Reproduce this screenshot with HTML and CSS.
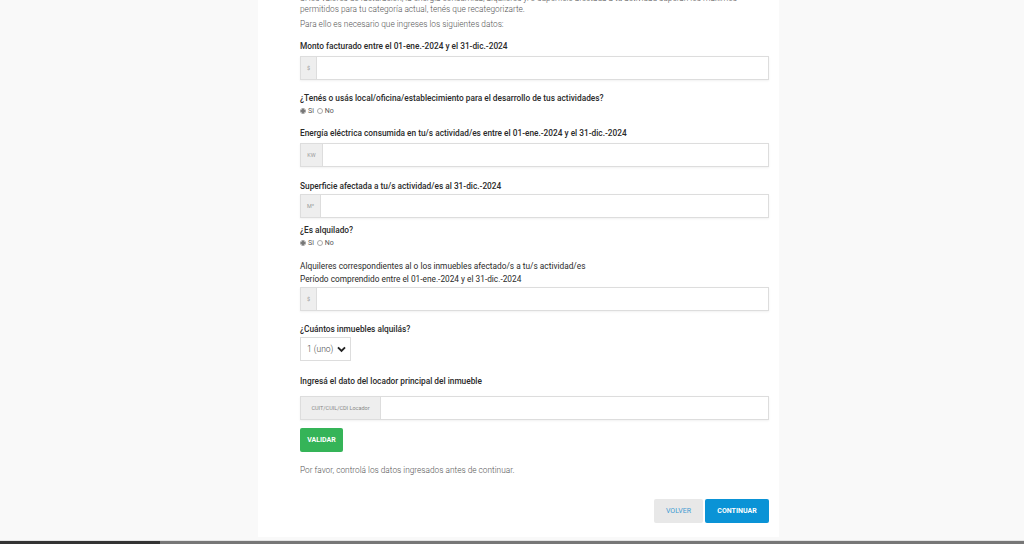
FILE: index.html
```html
<!DOCTYPE html>
<html lang="es">
<head>
<meta charset="utf-8">
<link rel="stylesheet" href="styles.css">
</head>
<body>
<div class="page">
  <main class="card">
    <p class="intro intro-cut">Si los valores de facturación, la energía consumida, alquileres y/o superficie afectada a tu actividad superan los máximos<br>permitidos para tu categoría actual, tenés que recategorizarte.</p>
    <p class="intro">Para ello es necesario que ingreses los siguientes datos:</p>

    <div class="field f-monto">
      <label class="lbl">Monto facturado entre el 01-ene.-2024 y el 31-dic.-2024</label>
      <div class="group"><span class="addon a-dollar">$</span><span class="ctrl"></span></div>
    </div>

    <div class="field f-local">
      <label class="lbl lbl-radio">¿Tenés o usás local/oficina/establecimiento para el desarrollo de tus actividades?</label>
      <div class="radios"><span class="radio on"></span>Si <span class="radio"></span>No</div>
    </div>

    <div class="field f-energia">
      <label class="lbl">Energía eléctrica consumida en tu/s actividad/es entre el 01-ene.-2024 y el 31-dic.-2024</label>
      <div class="group"><span class="addon a-kw">KW</span><span class="ctrl"></span></div>
    </div>

    <div class="field f-sup">
      <label class="lbl lbl-tight">Superficie afectada a tu/s actividad/es al 31-dic.-2024</label>
      <div class="group"><span class="addon a-m2">M²</span><span class="ctrl"></span></div>
    </div>

    <div class="field f-alq">
      <label class="lbl lbl-radio">¿Es alquilado?</label>
      <div class="radios"><span class="radio on"></span>Si <span class="radio"></span>No</div>
    </div>

    <div class="field f-alquileres">
      <label class="lbl lbl-reg">Alquileres correspondientes al o los inmuebles afectado/s a tu/s actividad/es<br>Período comprendido entre el 01-ene.-2024 y el 31-dic.-2024</label>
      <div class="group"><span class="addon a-dollar">$</span><span class="ctrl"></span></div>
    </div>

    <div class="field f-cuantos">
      <label class="lbl lbl-sel">¿Cuántos inmuebles alquilás?</label>
      <div class="select">1 (uno)
        <svg class="chev" viewBox="0 0 10 8" width="9" height="7"><path d="M1 1.5 L5 5.5 L9 1.5" fill="none" stroke="#222" stroke-width="2.2"/></svg>
      </div>
    </div>

    <div class="field f-locador">
      <label class="lbl">Ingresá el dato del locador principal del inmueble</label>
      <div class="group"><span class="addon a-cuit">CUIT/CUIL/CDI Locador</span><span class="ctrl"></span></div>
    </div>

    <button class="btn btn-green">VALIDAR</button>

    <p class="intro note">Por favor, controlá los datos ingresados antes de continuar.</p>

    <div class="actions">
      <button class="btn btn-gray">VOLVER</button>
      <button class="btn btn-blue">CONTINUAR</button>
    </div>
  </main>
</div>
<div class="scrollbar"><span class="thumb"></span></div>
</body>
</html>
```
FILE: styles.css
```css
html, body {
  margin: 0;
  padding: 0;
}
body {
  background: #f9f9f9;
  font-family: Roboto, "Liberation Sans", sans-serif;
  color: #333;
  width: 1024px;
  height: 544px;
  overflow: hidden;
  position: relative;
}
.page {
  height: 537px;
  overflow: hidden;
}
.card {
  margin-left: 258px;
  width: 521px;
  box-sizing: border-box;
  padding: 0 10px 0 42px;
  background: #fff;
  height: 537px;
  display: flex;
  flex-direction: column;
}
.card > * {
  flex-shrink: 0;
}
.intro {
  margin: 0;
  font-size: 8.3px;
  line-height: 11px;
  font-weight: 300;
  color: #555;
}
.intro-cut {
  margin-top: -7px;
}
.intro + .intro {
  margin-top: 4px;
}
.field {
  display: flex;
  flex-direction: column;
}
.field > * {
  flex-shrink: 0;
}
.lbl {
  font-size: 8.3px;
  line-height: 11px;
  font-weight: 500;
  color: #2a2a2a;
  margin-bottom: 4px;
}
.lbl-radio { margin-bottom: 0; }
.lbl-tight { margin-bottom: 2px; }
.lbl-sel { margin-bottom: 2px; }
.lbl-reg {
  font-weight: 400;
  line-height: 13px;
  margin-bottom: 1px;
}
.f-monto { margin-top: 11px; }
.f-local { margin-top: 13px; }
.f-energia { margin-top: 12px; }
.f-sup { margin-top: 14px; }
.f-alq { margin-top: 7px; }
.f-alquileres { margin-top: 12px; }
.f-cuantos { margin-top: 13px; }
.f-locador { margin-top: 15px; }
.f-locador .lbl { margin-bottom: 9px; }

.group {
  display: flex;
  height: 24px;
  border: 1px solid #ddd;
  box-sizing: border-box;
  box-shadow: 0 1px 2px rgba(0,0,0,0.06);
}
.addon {
  background: #eee;
  border-right: 1px solid #ddd;
  color: #999;
  font-size: 5.5px;
  display: flex;
  align-items: center;
  justify-content: center;
}
.a-dollar { width: 15px; }
.a-kw { width: 21px; }
.a-m2 { width: 19px; }
.a-cuit { width: 79px; color: #888; }
.ctrl { flex: 1; background: #fff; }

.radios {
  display: flex;
  align-items: center;
  font-size: 7px;
  color: #555;
  line-height: 10px;
  margin-top: 2px;
}
.radio {
  width: 6px;
  height: 6px;
  border: 1px solid #aaa;
  border-radius: 50%;
  margin-right: 2px;
  box-sizing: border-box;
}
.radio:not(:first-child) { margin-left: 3px; }
.radio.on {
  background: radial-gradient(circle, #777 0 1.6px, #fff 1.9px);
  border-color: #999;
}

.select {
  width: 51px;
  height: 24px;
  box-sizing: border-box;
  border: 1px solid #ddd;
  display: flex;
  align-items: center;
  justify-content: space-between;
  padding: 0 4px 0 6px;
  font-size: 8.5px;
  font-weight: 300;
  color: #444;
}
.chev { display: block; }

.btn {
  border: 0;
  font-family: inherit;
  font-size: 7px;
  font-weight: 700;
  height: 24px;
  padding: 0;
  border-radius: 2px;
  cursor: pointer;
  flex-shrink: 0;
}
.btn-green {
  margin-top: 8px;
  width: 43px;
  background: #35b458;
  color: #fff;
  align-self: flex-start;
}
.note {
  margin-top: 13px;
}
.actions {
  margin-top: 23px;
  display: flex;
  justify-content: flex-end;
  gap: 2px;
}
.btn-gray {
  width: 49px;
  background: #e8e8e8;
  color: #3e9bd2;
  font-weight: 400;
}
.btn-blue {
  width: 64px;
  background: #0a93d6;
  color: #fff;
}
.scrollbar {
  position: absolute;
  left: 0;
  bottom: 0;
  width: 1024px;
  height: 3px;
  background: #777;
  border-top: 1px solid #e4e4e4;
}
.thumb {
  display: block;
  width: 160px;
  height: 3px;
  background: #333;
}
```
